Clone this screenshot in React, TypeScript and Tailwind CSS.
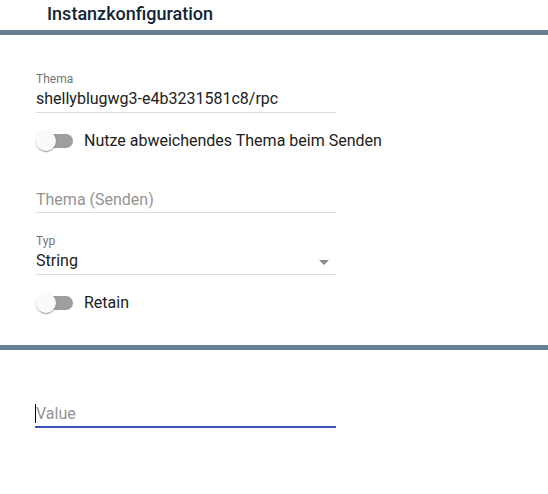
import React from "react";

function Switch() {
  return (
    <div className="relative w-[40px] h-[20px] shrink-0">
      <div className="absolute left-[3px] top-[3px] w-[34px] h-[14px] rounded-full bg-[#9e9e9e]" />
      <div className="absolute left-0 top-0 w-[20px] h-[20px] rounded-full bg-[#fafafa] shadow-[0_2px_1px_-1px_rgba(0,0,0,0.2),0_1px_1px_0_rgba(0,0,0,0.14),0_1px_3px_0_rgba(0,0,0,0.12)]" />
    </div>
  );
}

export default function App() {
  return (
    <div className="w-[548px] h-[494px] bg-white overflow-hidden font-['Roboto',sans-serif]">
      <div className="h-[30px] pl-[47px]">
        <div className="text-[18px] leading-[28px] font-medium text-[#132436]">Instanzkonfiguration</div>
      </div>
      <div className="h-[5px] bg-[#697f92]" />

      <div className="pl-[36px] flex flex-col">
        {/* Thema */}
        <div className="mt-[36px] w-[300px]">
          <div className="text-[12px] leading-[16px] text-[#757575]">Thema</div>
          <div className="mt-[2px] pb-[4px] border-b border-[#dcdcdc] text-[16px] leading-[19px] text-[#212121]">
            shellyblugwg3-e4b3231581c8/rpc
          </div>
        </div>

        {/* switch 1 */}
        <div className="mt-[18px] h-[20px] flex items-center">
          <Switch />
          <span className="ml-[8px] text-[16px] leading-[20px] text-[#212121]">Nutze abweichendes Thema beim Senden</span>
        </div>

        {/* Thema (Senden) */}
        <div className="mt-[39px] w-[300px] pb-[3px] border-b border-[#dcdcdc] text-[16px] leading-[19px] text-[#949494]">
          Thema (Senden)
        </div>

        {/* Typ */}
        <div className="mt-[20px] w-[300px]">
          <div className="text-[12px] leading-[16px] text-[#757575]">Typ</div>
          <div className="mt-[2px] pb-[4px] border-b border-[#dcdcdc] flex items-start justify-between text-[16px] leading-[19px] text-[#212121]">
            <span>String</span>
            <svg width="24" height="24" viewBox="0 0 24 24" className="-mt-[1px] -mb-[4px]">
              <path d="M7 10l5 5 5-5z" fill="rgba(0,0,0,0.45)" />
            </svg>
          </div>
        </div>

        {/* Retain */}
        <div className="mt-[18px] h-[20px] flex items-center">
          <Switch />
          <span className="ml-[8px] text-[16px] leading-[20px] text-[#212121]">Retain</span>
        </div>
      </div>

      <div className="mt-[32px] h-[5px] bg-[#697f92]" />

      <div className="pl-[35px]">
        <div className="mt-[54px] w-[301px] pb-[3px] border-b-2 border-[#3f51b5] flex items-center text-[16px] leading-[19px] text-[#949494]">
          <span className="w-[1px] h-[19px] bg-black" />
          <span>Value</span>
        </div>
      </div>
    </div>
  );
}
